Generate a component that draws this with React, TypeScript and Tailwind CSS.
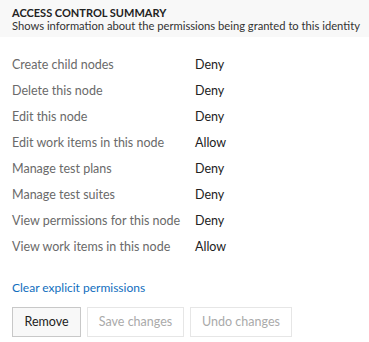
import React from "react";

const rows: [string, string][] = [
  ["Create child nodes", "Deny"],
  ["Delete this node", "Deny"],
  ["Edit this node", "Deny"],
  ["Edit work items in this node", "Allow"],
  ["Manage test plans", "Deny"],
  ["Manage test suites", "Deny"],
  ["View permissions for this node", "Deny"],
  ["View work items in this node", "Allow"],
];

export default function App() {
  return (
    <div className="w-[369px] h-[342px] bg-white text-[12.5px] text-[#333]" style={{ fontFamily: 'Lato, "Open Sans", sans-serif' }}>
      <div className="bg-[#f8f8f8] h-[37px] px-[12px] pt-[6px] leading-[13px] whitespace-nowrap text-[11.2px]">
        <div className="font-bold text-[#222] text-[11px]">ACCESS CONTROL SUMMARY</div>
        <div className="text-[#333]">Shows information about the permissions being granted to this identity</div>
      </div>
      <div className="pt-[15px] px-[12px]">
        {rows.map(([l, v]) => (
          <div key={l} className="flex h-[26px] items-center">
            <div className="w-[183px] text-[#6a6a6a]">{l}</div>
            <div className="text-[#222]">{v}</div>
          </div>
        ))}
      </div>
      <div className="px-[12px] pt-[20px] text-[#106ebe] leading-[16px] text-[12px]">Clear explicit permissions</div>
      <div className="flex gap-[6px] px-[12px] pt-[11px]">
        <button className="h-[30px] w-[69px] border border-[#c8c8c8] bg-[#f8f8f8] text-[#222]">Remove</button>
        <button className="h-[30px] w-[97px] border border-[#e6e6e6] bg-white text-[#aaa]">Save changes</button>
        <button className="h-[30px] w-[102px] border border-[#e6e6e6] bg-white text-[#aaa]">Undo changes</button>
      </div>
    </div>
  );
}
